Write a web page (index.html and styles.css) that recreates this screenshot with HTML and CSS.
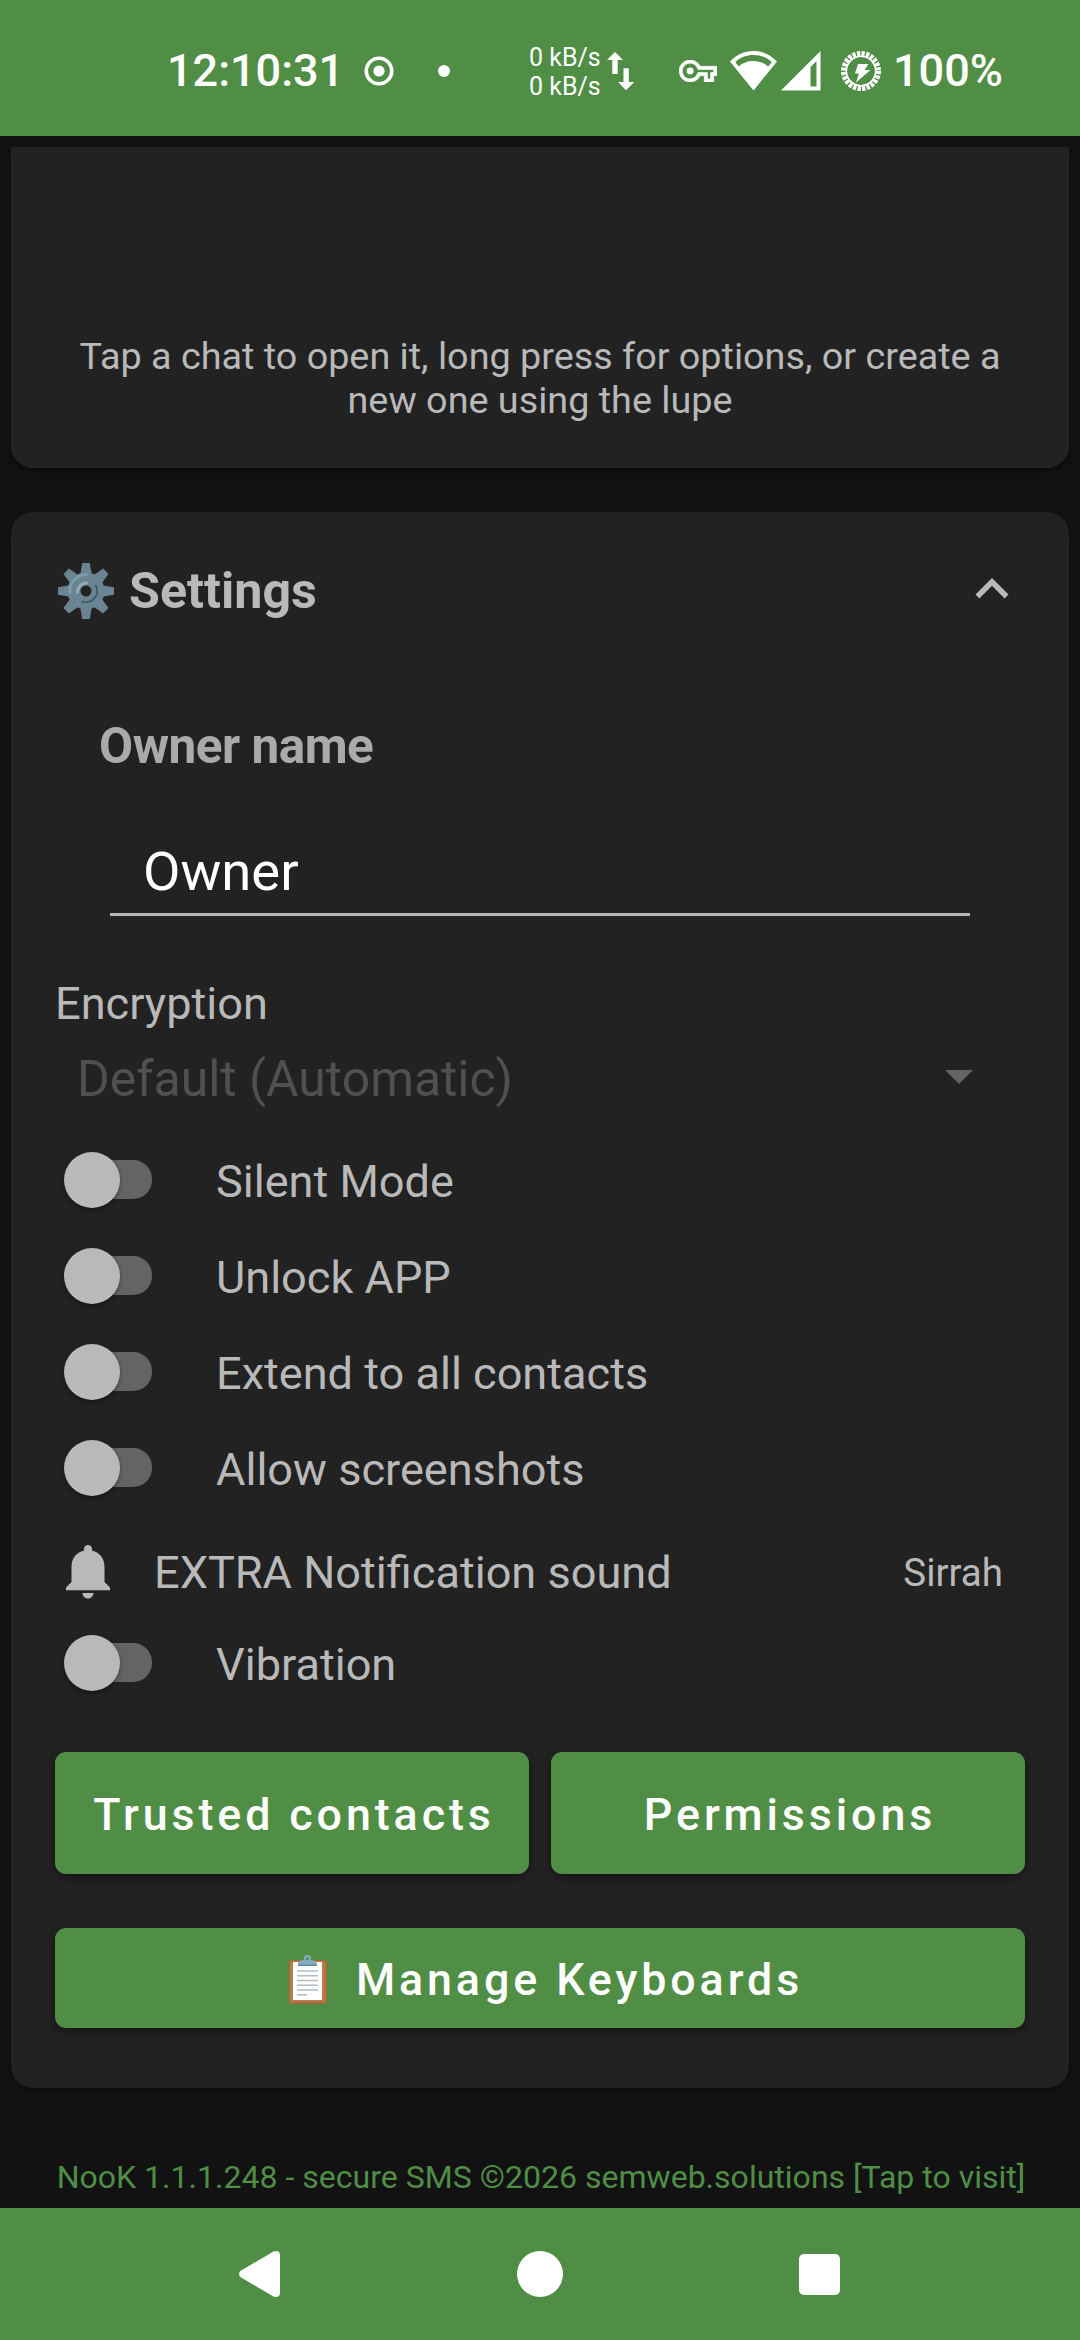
FILE: index.html
```html
<!DOCTYPE html>
<html lang="en">
<head>
	<meta charset="UTF-8">
	<title>NooK</title>
	<link rel="stylesheet" href="styles.css">
</head>
<body>
	<!--1. Status bar-->
	<header class="status">
		<span class="clock">12:10:31</span>
		<svg class="ic-rec" viewBox="0 0 30 30"><circle cx="15" cy="15" r="12.7" fill="none" stroke="#fff" stroke-width="3.6"/><circle cx="15" cy="15" r="5.6" fill="#fff"/></svg>
		<span class="dot"></span>
		<div class="speed">
			<span>0 kB/s</span>
			<span>0 kB/s</span>
		</div>
		<svg class="ic-arrows" viewBox="0 0 28 38"><path fill="#fff" d="M8 0l8 8h-5.300v14H5.300V8H0zM16.500 16.300h5.300V30h5.400l-8.100 8.200L11 30h5.500z"/></svg>
		<svg class="ic-key" viewBox="0 5 24 14"><path fill="#fff" stroke="#fff" stroke-width=".4" d="M22 19h-6v-4h-2.680c-1.140 2.420-3.600 4-6.320 4-3.860 0-7-3.140-7-7s3.140-7 7-7c2.720 0 5.170 1.580 6.320 4H24v6h-2v4zm-4-2h2v-4h2v-2H11.940l-.230-.670C11.010 8.340 9.110 7 7 7c-2.760 0-5 2.240-5 5s2.240 5 5 5c2.110 0 4.010-1.340 4.710-3.330l.230-.670H18v4z"/><circle cx="7" cy="12" r="2.200" fill="#fff"/></svg>
		<svg class="ic-wifi" viewBox="0 0 47 40"><path fill="#fff" fill-rule="evenodd" d="M0 10.500C6.200 4 14.500 0 23.500 0S40.800 4 47 10.500L23.500 39.500zM5.200 11l3.600 4.400C12.500 12 17.500 10 23.500 10s11 2 14.700 5.400L41.800 11C37 6.500 30.500 4 23.500 4S10 6.500 5.200 11z"/></svg>
		<svg class="ic-signal" viewBox="0 0 40 40"><path fill="#fff" fill-rule="evenodd" d="M0 39.500L39.500 0v39.500zM29.500 16v19.500h6V10z"/></svg>
		<svg class="ic-battery" viewBox="0 0 42 42"><circle cx="21" cy="21" r="17" fill="none" stroke="#fff" stroke-width="6" stroke-dasharray="3.150 1.300"/><circle cx="21" cy="21" r="14.700" fill="none" stroke="#fff" stroke-width="1.600"/><path fill="#fff" d="M18 14h10.500l-4 6h6L16 32.500l3-9h-4z"/></svg>
		<span class="percent">100%</span>
	</header>

	<main class="content">
		<!--2. Chats card-->
		<section class="card chats">
			<p class="hint">Tap a chat to open it, long press for options, or create a<br>new one using the lupe</p>
		</section>

		<!--3. Settings card-->
		<section class="card settings">
			<div class="head">
				<svg class="ic-gear" viewBox="0 0 56 56">
					<g fill="#6b8491">
						<path id="tooth" d="M24.200 0h7.600l2 12H22.200zM24.200 56h7.600l2-12H22.200z"/>
						<use href="#tooth" transform="rotate(45 28 28)"/>
						<use href="#tooth" transform="rotate(90 28 28)"/>
						<use href="#tooth" transform="rotate(135 28 28)"/>
					</g>
					<circle cx="28" cy="28" r="12" fill="none" stroke="#6b8491" stroke-width="13"/>
					<path d="M12 30a16.500 16.500 0 0 1 16.500-18.500" fill="none" stroke="#7b9ca8" stroke-width="3" stroke-linecap="round"/>
					<path d="M19.500 29a9 9 0 0 1 9-9" fill="none" stroke="#93abb2" stroke-width="3" stroke-linecap="round"/>
					<path d="M37.500 22a11.300 11.300 0 0 1-14 16.300" fill="none" stroke="#3c5b68" stroke-width="2"/>
				</svg>
				<h2 class="tit">Settings</h2>
				<svg class="ic-up" viewBox="0 0 24 24"><path fill="#b9b9b9" d="M12 8l-6 6 1.410 1.410L12 10.830l4.590 4.580L18 14z"/></svg>
			</div>

			<h3 class="label">Owner name</h3>
			<div class="field">Owner</div>

			<p class="enc">Encryption</p>
			<div class="select">
				<span>Default (Automatic)</span>
				<i class="caret"></i>
			</div>

			<ul class="list">
				<li class="row"><i class="switch"></i><span>Silent Mode</span></li>
				<li class="row"><i class="switch"></i><span>Unlock APP</span></li>
				<li class="row"><i class="switch"></i><span>Extend to all contacts</span></li>
				<li class="row"><i class="switch"></i><span>Allow screenshots</span></li>
				<li class="row sound">
					<svg class="ic-bell" viewBox="0 0 24 24"><path fill="#b9b9b9" d="M12 22c1.100 0 2-.900 2-2h-4c0 1.100.900 2 2 2zM18 16v-5.500c0-3.070-1.640-5.300-4.500-5.900V4c0-.830-.670-1.500-1.500-1.500s-1.500.670-1.500 1.500v.600C7.640 5.200 6 7.430 6 10.500V16l-2 2v1h16v-1z"/></svg>
					<span>EXTRA Notification sound</span>
					<em>Sirrah</em>
				</li>
				<li class="row"><i class="switch"></i><span>Vibration</span></li>
			</ul>

			<div class="btns">
				<a class="btn">Trusted contacts</a>
				<a class="btn">Permissions</a>
			</div>
			<a class="btn wide">
				<svg class="ic-clip" viewBox="0 0 38 49">
					<rect x="0" y="5" width="38" height="44" rx="2" fill="#a9693f"/>
					<rect x="1" y="6" width="35.500" height="41" rx="1.500" fill="#b67b4a"/>
					<rect x="4" y="7" width="29" height="38" rx="1" fill="#fff"/>
					<path d="M8 16h21M8 20.800h21M8 25.500h21M8 30.300h21M8 35h21M8 39.800h10" stroke="#b4bdc6" stroke-width="1.500"/>
					<circle cx="18.300" cy="3.600" r="2.600" fill="none" stroke="#82aec4" stroke-width="2"/>
					<path d="M9 11V8.500C9 6.500 12 5.500 14.500 5h8c2.500.500 5.500 1.500 5.500 3.500V11z" fill="#82aec4"/>
					<path d="M9 9.500h19V11H9z" fill="#5f8aa0"/>
				</svg>
				<span>Manage Keyboards</span>
			</a>
		</section>

		<p class="visit">NooK 1.1.1.248 - secure SMS ©2026 semweb.solutions [Tap to visit]</p>
	</main>

	<!--4. Navigation bar-->
	<nav class="navbar">
		<svg class="ic-back" viewBox="0 0 42 48"><path fill="#fff" d="M2 20.500L34.500 1.500C38 0 41 1.500 41 5v38c0 3.500-3 5-6.500 3.500L2 27.500c-2.600-1.800-2.600-5.200 0-7z"/></svg>
		<span class="home"></span>
		<span class="recent"></span>
	</nav>
</body>
</html>
```
FILE: styles.css
```css
html,body,ul,h2,h3,p{
	margin: 0;
	padding: 0;
}
body{
	display: flex;
	flex-direction: column;
	width: 1080px;
	height: 2340px;
	overflow: hidden;
	background-color: #121212;
	color: #b9b9b9;
	font-family: Roboto, sans-serif;
	font-size: 45.1px;
}
ul{
	list-style: none;
}
i,em{
	font-style: normal;
}
svg{
	display: block;
	flex: none;
}

/* Status bar */
.status{
	display: flex;
	align-items: center;
	box-sizing: border-box;
	height: 136px;
	padding: 6px 0 0 167px;
	background-color: #508e46;
	color: #fff;
	white-space: nowrap;
}
.clock{
	width: 176px;
	padding-bottom: 1px;
	font-size: 45px;
	font-weight: 500;
}
.ic-rec{
	width: 30px;
	height: 30px;
	margin-left: 21px;
}
.dot{
	width: 12px;
	height: 12px;
	margin-left: 44px;
	border-radius: 50%;
	background-color: #fff;
}
.speed{
	display: flex;
	flex-direction: column;
	width: 71px;
	margin-left: 79px;
	padding-top: 2px;
	font-size: 25px;
	line-height: 29px;
}
.ic-arrows{
	width: 28px;
	height: 38px;
	margin-left: 7px;
}
.ic-key{
	width: 38px;
	height: 22px;
	margin-left: 44px;
}
.ic-wifi{
	width: 47px;
	height: 40px;
	margin-left: 13px;
}
.ic-signal{
	width: 40px;
	height: 40px;
	margin-left: 4px;
}
.ic-battery{
	width: 42px;
	height: 42px;
	margin-left: 19px;
}
.percent{
	margin-left: 11px;
	padding-bottom: 1px;
	font-size: 45px;
	font-weight: 500;
}

/* Cards */
.content{
	height: 2061px;
	padding: 11px 11px 0;
}
.card{
	box-sizing: border-box;
	border-radius: 22px;
	background-color: #222;
	box-shadow: 0 3px 6px rgba(0,0,0,.35);
}
.chats{
	height: 321px;
	padding: 187px 44px 0;
	border-radius: 0 0 22px 22px;
}
.hint{
	font-size: 37.75px;
	line-height: 44px;
	text-align: center;
}
.settings{
	height: 1576px;
	margin-top: 44px;
	padding: 44px 44px 0;
}

/* Settings title */
.head{
	display: flex;
	align-items: center;
	height: 66px;
}
.ic-gear{
	width: 56px;
	height: 56px;
	margin: 4px 0 0 3px;
}
.tit{
	flex: 1;
	margin-left: 15px;
	padding-top: 3px;
	font-size: 50.2px;
	font-weight: 700;
}
.ic-up{
	width: 66px;
	height: 66px;
}

/* Owner name */
.label{
	margin: 94px 44px 0;
	color: #aaa;
	font-size: 49.5px;
	font-weight: 700;
	letter-spacing: -.5px;
	line-height: 60px;
}
.field{
	margin: 66px 55px 0;
	padding: 0 33px 11px;
	border-bottom: 3px solid #b5b5b5;
	color: #fff;
	font-size: 54.4px;
	line-height: 60px;
}

/* Encryption */
.enc{
	margin-top: 62px;
	line-height: 52px;
}
.select{
	display: flex;
	justify-content: space-between;
	align-items: center;
	height: 66px;
	margin-top: 16px;
	padding: 0 52px 0 22px;
	color: #505050;
	font-size: 49.9px;
}
.caret{
	margin-top: -4px;
	border: 14px solid transparent;
	border-top-color: #646464;
	border-bottom: 0;
}

/* Switch list */
.list{
	margin-top: 20px;
}
.row{
	display: flex;
	align-items: center;
	height: 96px;
}
.row span{
	padding-top: 2px;
}
.switch{
	position: relative;
	width: 72px;
	height: 39px;
	margin: 0 64px 2px 25px;
	border-radius: 19px;
	background-color: #646464;
}
/* thumb */
.switch::before{
	content: "";
	position: absolute;
	top: -8px;
	left: -16px;
	width: 56px;
	height: 56px;
	border-radius: 50%;
	background-color: #b9b9b9;
	box-shadow: 0 2px 4px rgba(0,0,0,.4);
}
.sound{
	box-sizing: border-box;
	height: 99px;
	padding-top: 11px;
}
.ic-bell{
	width: 66px;
	height: 66px;
	margin-right: 33px;
}
.sound em{
	margin-left: auto;
	padding: 2px 22px 0 0;
	font-size: 38.5px;
}

/* Buttons */
.btns{
	display: flex;
	gap: 22px;
	margin-top: 41px;
}
.btn{
	display: flex;
	flex: 1;
	justify-content: center;
	align-items: center;
	box-sizing: border-box;
	height: 122px;
	padding: 2px 0 0 4px;
	border-radius: 11px;
	background-color: #508e46;
	box-shadow: 0 4px 8px rgba(0,0,0,.35);
	color: #fff;
	font-size: 44.8px;
	font-weight: 500;
	letter-spacing: 3.9px;
	white-space: nowrap;
}
.wide{
	height: 100px;
	margin-top: 54px;
	padding-left: 12px;
}
.ic-clip{
	width: 38px;
	height: 49px;
	margin: 0 29px 0 0;
}

/* Footer link */
.visit{
	margin-top: 67px;
	padding-left: 2px;
	color: #508e46;
	font-size: 32.05px;
	line-height: 44px;
	text-align: center;
	white-space: nowrap;
}

/* Navigation bar */
.navbar{
	display: flex;
	align-items: center;
	height: 132px;
	padding-left: 239px;
	background-color: #508e46;
}
.ic-back{
	width: 42px;
	height: 48px;
}
.home{
	width: 46px;
	height: 46px;
	margin-left: 236px;
	border-radius: 50%;
	background-color: #fff;
}
.recent{
	width: 41px;
	height: 41px;
	margin-left: 236px;
	border-radius: 5px;
	background-color: #fff;
}
```
